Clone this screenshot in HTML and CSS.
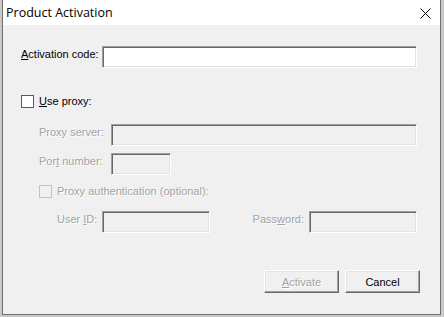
FILE: index.html
```html
<!DOCTYPE html>
<html lang="en">
    <head>
        <meta charset="UTF-8" />
        <meta name="viewport" content="width=device-width, initial-scale=1.0" />
        <title>Product Activation</title>
        <link rel="stylesheet" href="styles.css">
    </head>
    <body>
        <div class="dialog">
            <div class="titlebar">
                <span class="title">Product Activation</span>
                <span class="close">
                    <svg width="11" height="11" viewBox="0 0 11 11">
                        <path d="M0.5 0.5 L10.5 10.5 M10.5 0.5 L0.5 10.5" stroke="#000" stroke-width="1" fill="none" />
                    </svg>
                </span>
            </div>

            <form class="content">
                <div class="row row-code">
                    <label class="label code-label"><u>A</u>ctivation code:</label>
                    <input type="text" class="field field-wide" />
                </div>

                <div class="row row-check">
                    <input type="checkbox" class="check" />
                    <label class="check-label"><u>U</u>se proxy:</label>
                </div>

                <div class="proxy">
                    <div class="row row-server">
                        <label class="label proxy-label disabled">Proxy server:</label>
                        <input type="text" class="field field-wide" disabled />
                    </div>

                    <div class="row row-port">
                        <label class="label proxy-label disabled">Por<u>t</u> number:</label>
                        <input type="text" class="field field-port" disabled />
                    </div>

                    <div class="row row-auth">
                        <input type="checkbox" class="check" disabled />
                        <label class="check-label disabled">Proxy authentication (optional):</label>
                    </div>

                    <div class="row row-user">
                        <label class="label user-label disabled">User <u>I</u>D:</label>
                        <input type="text" class="field field-small" disabled />
                        <div class="password">
                            <label class="label pass-label disabled">Pass<u>w</u>ord:</label>
                            <input type="password" class="field field-small" disabled />
                        </div>
                    </div>
                </div>

                <div class="buttons">
                    <button type="button" class="btn" disabled><u>A</u>ctivate</button>
                    <button type="button" class="btn">Cancel</button>
                </div>
            </form>
        </div>
    </body>
</html>
```

FILE: styles.css
```css
body {
    margin: 0;
    padding: 0;
    background-color: #c9c9c9;
    font-family: "Liberation Sans", Arial, sans-serif;
    font-size: 11px;
    color: #000;
}

.dialog {
    width: 437px;
    height: 314px;
    margin-left: 2px;
    border: 1px solid #6f6f6f;
    border-top: none;
    background-color: #f0f0f0;
    display: flex;
    flex-direction: column;
}

.titlebar {
    height: 25px;
    background-color: #fff;
    display: flex;
    align-items: center;
    justify-content: space-between;
    padding: 0 9px 0 3px;
}

.title {
    font-family: "Open Sans", sans-serif;
    font-size: 12.5px;
    line-height: 25px;
}

.close {
    display: flex;
    margin-top: 1px;
}

.content {
    display: flex;
    flex-direction: column;
    padding: 0 23px 0 18px;
    margin: 0;
}

.row {
    display: flex;
    align-items: flex-start;
    height: 22px;
}

.row-code {
    margin-top: 21px;
}

.row-check {
    margin-top: 22px;
    align-items: center;
}

.proxy {
    display: flex;
    flex-direction: column;
    padding-left: 18px;
}

.row-server {
    margin-top: 12px;
}

.row-port {
    margin-top: 7px;
}

.row-auth {
    margin-top: 5px;
    align-items: center;
}

.row-user {
    margin-top: 9px;
    padding-left: 18px;
}

.label {
    line-height: 13px;
    padding-top: 2px;
    white-space: nowrap;
}

.code-label {
    width: 81px;
}

.proxy-label {
    width: 72px;
}

.user-label {
    width: 45px;
}

.password {
    display: flex;
    margin-left: auto;
}

.pass-label {
    margin-right: 5px;
}

.disabled {
    color: #a3a3a3;
    text-shadow: 1px 1px 0 #fff;
}

.field {
    box-sizing: border-box;
    height: 22px;
    margin: 0;
    padding: 0 3px;
    border: 1px solid;
    border-color: #a0a0a0 #fff #fff #a0a0a0;
    box-shadow: inset 1px 1px 0 #696969, inset -1px -1px 0 #e3e3e3;
    background-color: #fff;
    font-family: inherit;
    font-size: 11px;
    outline: none;
}

.field:disabled {
    background-color: #f0f0f0;
}

.field-wide {
    flex: 1;
}

.field-port {
    width: 60px;
}

.field-small {
    width: 108px;
}

.check {
    appearance: none;
    box-sizing: border-box;
    width: 13px;
    height: 13px;
    margin: 0 5px 0 0;
    border: 1px solid #5a5a5a;
    background-color: #fff;
}

.check:disabled {
    border-color: #c4c4c4;
    background-color: #f0f0f0;
}

.check-label {
    line-height: 13px;
}

.buttons {
    display: flex;
    justify-content: flex-end;
    gap: 6px;
    margin-top: 37px;
    margin-right: -3px;
}

.btn {
    box-sizing: border-box;
    width: 75px;
    height: 23px;
    padding: 0;
    border: 1px solid;
    border-color: #fff #696969 #696969 #fff;
    box-shadow: inset -1px -1px 0 #a0a0a0, inset 1px 1px 0 #e3e3e3;
    background-color: #f0f0f0;
    font-family: inherit;
    font-size: 11px;
    color: #000;
}

.btn:disabled {
    color: #a3a3a3;
    text-shadow: 1px 1px 0 #fff;
}
```
